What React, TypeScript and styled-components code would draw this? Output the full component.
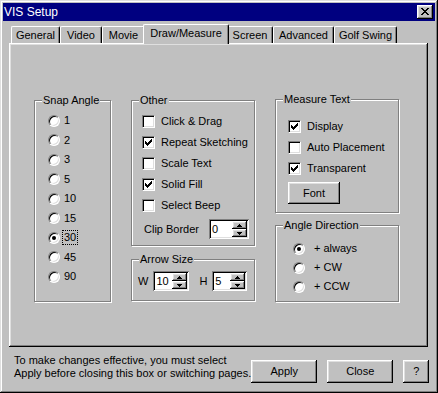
import React from 'react';
import styled, { createGlobalStyle, css } from 'styled-components';

const GlobalStyle = createGlobalStyle`
  html, body { margin: 0; padding: 0; background: #c0c0c0; }
  body {
    font-family: "Liberation Sans", Arial, sans-serif;
    font-size: 11px;
    color: #000;
  }
  * { box-sizing: border-box; }
`;

const raised = css`
  box-shadow: inset -1px -1px #000, inset 1px 1px #fff, inset -2px -2px #808080, inset 2px 2px #dfdfdf;
`;

const sunken = css`
  box-shadow: inset 1px 1px #808080, inset -1px -1px #fff, inset 2px 2px #000, inset -2px -2px #dfdfdf;
`;

const Window = styled.div`
  width: 438px;
  height: 393px;
  padding: 3px;
  background: #c0c0c0;
  box-shadow: inset -1px -1px #000, inset 1px 1px #dfdfdf, inset -2px -2px #808080, inset 2px 2px #fff;
  display: flex;
  flex-direction: column;
`;

const TitleBar = styled.div`
  height: 18px;
  flex: none;
  background: #000080;
  color: #fff;
  display: flex;
  align-items: center;
  justify-content: space-between;
  padding: 0 2px 0 1px;
  font-size: 12px;
`;

const CloseButton = styled.div`
  width: 16px;
  height: 14px;
  background: #c0c0c0;
  ${raised};
  display: flex;
  align-items: center;
  justify-content: center;
  padding: 0 1px 1px 0;
`;

const Body = styled.div`
  flex: 1;
  display: flex;
  flex-direction: column;
  padding: 3px 7px 0 6px;
`;

const TabRow = styled.div`
  display: flex;
  align-items: flex-end;
  height: 20px;
  padding-left: 2px;
  margin-bottom: -1px;
  position: relative;
  z-index: 1;
`;

const Tab = styled.div<{ $w: number; $active?: boolean }>`
  width: ${(p) => (p.$active ? p.$w + 4 : p.$w)}px;
  height: ${(p) => (p.$active ? 20 : 17)}px;
  margin: ${(p) => (p.$active ? '0 -2px 0 -2px' : '0 0 1px 0')};
  position: relative;
  z-index: ${(p) => (p.$active ? 2 : 1)};
  background: #c0c0c0;
  border-top: 1px solid #fff;
  border-left: 1px solid #fff;
  border-right: 1px solid #000;
  border-radius: 2px 2px 0 0;
  box-shadow: inset -1px 0 #808080;
  display: flex;
  justify-content: center;
  padding-top: 2px;
  line-height: 13px;
  white-space: nowrap;
`;

const Panel = styled.div`
  height: 304px;
  flex: none;
  background: #c0c0c0;
  box-shadow: inset -1px -1px #000, inset 1px 1px #fff, inset -2px -2px #808080, inset 2px 2px #dfdfdf;
  padding: 57px 0 0 25px;
  display: flex;
  align-items: flex-start;
  gap: 20px;
`;

const Column = styled.div<{ $gap: number }>`
  display: flex;
  flex-direction: column;
  gap: ${(p) => p.$gap}px;
`;

const Group = styled.div<{ $w: number; $pad: string; $top?: number }>`
  position: relative;
  width: ${(p) => p.$w}px;
  margin-top: ${(p) => p.$top ?? 0}px;
  border: 1px solid #808080;
  box-shadow: inset 1px 1px #fff, 1px 1px #fff;
  padding: ${(p) => p.$pad};
  display: flex;
  flex-direction: column;
`;

const Legend = styled.span`
  position: absolute;
  top: -7px;
  left: 7px;
  padding: 0 1px;
  background: #c0c0c0;
  line-height: 13px;
  white-space: nowrap;
`;

const OptionRow = styled.div<{ $h: number; $gap: number }>`
  height: ${(p) => p.$h}px;
  display: flex;
  align-items: center;
  gap: ${(p) => p.$gap}px;
  white-space: nowrap;
`;

const RadioCircle = styled.span`
  width: 12px;
  height: 12px;
  flex: none;
  border-radius: 50%;
  background: #fff;
  border: 1px solid;
  border-color: #808080 #fff #fff #808080;
  box-shadow: inset 1px 1px #000, inset -1px -1px #dfdfdf;
  display: flex;
  align-items: center;
  justify-content: center;
`;

const RadioDot = styled.span`
  width: 4px;
  height: 4px;
  border-radius: 50%;
  background: #000;
`;

const CheckBox = styled.span`
  width: 13px;
  height: 13px;
  flex: none;
  background: #fff;
  border: 1px solid;
  border-color: #808080 #fff #fff #808080;
  box-shadow: inset 1px 1px #000, inset -1px -1px #dfdfdf;
  display: flex;
  align-items: center;
  justify-content: center;
`;

const Label = styled.span<{ $focus?: boolean }>`
  line-height: 13px;
  padding: 0 1px;
  outline: ${(p) => (p.$focus ? '1px dotted #000' : 'none')};
  outline-offset: 0;
`;

const FieldRow = styled.div<{ $gap: number; $pad: number; $top?: number }>`
  display: flex;
  align-items: center;
  gap: ${(p) => p.$gap}px;
  padding-left: ${(p) => p.$pad}px;
  margin-top: ${(p) => p.$top ?? 0}px;
  white-space: nowrap;
`;

const SpinBox = styled.div<{ $w: number }>`
  width: ${(p) => p.$w}px;
  height: 20px;
  flex: none;
  background: #fff;
  ${sunken};
  display: flex;
  align-items: center;
  padding: 2px;
`;

const SpinValue = styled.span`
  flex: 1;
  padding-left: 1px;
  line-height: 13px;
`;

const SpinButtons = styled.div`
  width: 15px;
  height: 16px;
  display: flex;
  flex-direction: column;
`;

const SpinButton = styled.div`
  flex: 1;
  background: #c0c0c0;
  ${raised};
  display: flex;
  align-items: center;
  justify-content: center;
`;

const Button = styled.div<{ $w: number; $h: number }>`
  width: ${(p) => p.$w}px;
  height: ${(p) => p.$h}px;
  flex: none;
  background: #c0c0c0;
  ${raised};
  display: flex;
  align-items: center;
  justify-content: center;
  line-height: 13px;
`;

const Footer = styled.div`
  display: flex;
  align-items: flex-start;
  padding: 0 1px 0 5px;
`;

const FooterText = styled.div`
  margin-top: 7px;
  line-height: 13px;
  white-space: nowrap;
`;

const FooterButtons = styled.div`
  margin-left: auto;
  margin-top: 13px;
  display: flex;
  gap: 10px;
`;

const Check = () => (
  <svg width="7" height="7" viewBox="0 0 7 7" shapeRendering="crispEdges">
    <path
      d="M0 2h1v3H0z M1 3h1v3H1z M2 4h1v3H2z M3 3h1v3H3z M4 2h1v3H4z M5 1h1v3H5z M6 0h1v3H6z"
      fill="#000"
    />
  </svg>
);

const Arrow = ({ up }: { up?: boolean }) => (
  <svg width="5" height="3" viewBox="0 0 5 3" shapeRendering="crispEdges">
    <path d={up ? 'M2 0h1v1H2z M1 1h3v1H1z M0 2h5v1H0z' : 'M0 0h5v1H0z M1 1h3v1H1z M2 2h1v1H2z'} fill="#000" />
  </svg>
);

const CloseGlyph = () => (
  <svg width="8" height="7" viewBox="0 0 8 7" shapeRendering="crispEdges">
    <path
      d="M0 0h2v1H0z M6 0h2v1H6z M1 1h2v1H1z M5 1h2v1H5z M2 2h4v1H2z M3 3h2v1H3z M2 4h4v1H2z M1 5h2v1H1z M5 5h2v1H5z M0 6h2v1H0z M6 6h2v1H6z"
      fill="#000"
    />
  </svg>
);

const Radio = ({ label, checked, focus, h, gap }: { label: string; checked?: boolean; focus?: boolean; h: number; gap: number }) => (
  <OptionRow $h={h} $gap={gap}>
    <RadioCircle>{checked && <RadioDot />}</RadioCircle>
    <Label $focus={focus}>{label}</Label>
  </OptionRow>
);

const Checkbox = ({ label, checked, h }: { label: string; checked?: boolean; h: number }) => (
  <OptionRow $h={h} $gap={5}>
    <CheckBox>{checked && <Check />}</CheckBox>
    <Label>{label}</Label>
  </OptionRow>
);

const Spin = ({ value, w }: { value: string; w: number }) => (
  <SpinBox $w={w}>
    <SpinValue>{value}</SpinValue>
    <SpinButtons>
      <SpinButton>
        <Arrow up />
      </SpinButton>
      <SpinButton>
        <Arrow />
      </SpinButton>
    </SpinButtons>
  </SpinBox>
);

const tabs = [
  { label: 'General', w: 49 },
  { label: 'Video', w: 42 },
  { label: 'Movie', w: 43 },
  { label: 'Draw/Measure', w: 82, active: true },
  { label: 'Screen', w: 46 },
  { label: 'Advanced', w: 61 },
  { label: 'Golf Swing', w: 63 },
];

const snapAngles = ['1', '2', '3', '5', '10', '15', '30', '45', '90'];

export default function App() {
  return (
    <>
      <GlobalStyle />
      <Window>
        <TitleBar>
          <span>VIS Setup</span>
          <CloseButton>
            <CloseGlyph />
          </CloseButton>
        </TitleBar>
        <Body>
          <TabRow>
            {tabs.map((t) => (
              <Tab key={t.label} $w={t.w} $active={t.active}>
                {t.label}
              </Tab>
            ))}
          </TabRow>
          <Panel>
            <Group $w={77} $pad="10px 0 14px 13px">
              <Legend>Snap Angle</Legend>
              {snapAngles.map((a) => (
                <Radio key={a} label={a} checked={a === '30'} focus={a === '30'} h={19.5} gap={3} />
              ))}
            </Group>
            <Column $gap={13}>
              <Group $w={124} $pad="10px 0 6px 10px">
                <Legend>Other</Legend>
                <Checkbox label="Click & Drag" h={21} />
                <Checkbox label="Repeat Sketching" checked h={21} />
                <Checkbox label="Scale Text" h={21} />
                <Checkbox label="Solid Fill" checked h={21} />
                <Checkbox label="Select Beep" h={21} />
                <FieldRow $gap={10} $pad={2} $top={3}>
                  <span>Clip Border</span>
                  <Spin value="0" w={40} />
                </FieldRow>
              </Group>
              <Group $w={124} $pad="11px 0 9px 6px">
                <Legend>Arrow Size</Legend>
                <FieldRow $gap={5} $pad={0}>
                  <span>W</span>
                  <Spin value="10" w={36} />
                  <span style={{ marginLeft: 5 }}>H</span>
                  <Spin value="5" w={35} />
                </FieldRow>
              </Group>
            </Column>
            <Column $gap={12}>
              <Group $w={124} $pad="16px 0 8px 12px" $top={-1}>
                <Legend>Measure Text</Legend>
                <Checkbox label="Display" checked h={21} />
                <Checkbox label="Auto Placement" h={21} />
                <Checkbox label="Transparent" checked h={21} />
                <FieldRow $gap={0} $pad={-2} $top={3}>
                  <Button $w={52} $h={22}>Font</Button>
                </FieldRow>
              </Group>
              <Group $w={124} $pad="13px 0 5px 17px">
                <Legend>Angle Direction</Legend>
                <Radio label="+ always" checked h={19} gap={8} />
                <Radio label="+ CW" h={19} gap={8} />
                <Radio label="+ CCW" h={19} gap={8} />
              </Group>
            </Column>
          </Panel>
          <Footer>
            <FooterText>
              To make changes effective, you must select
              <br />
              Apply before closing this box or switching pages.
            </FooterText>
            <FooterButtons>
              <Button $w={66} $h={23}>Apply</Button>
              <Button $w={66} $h={23}>Close</Button>
              <Button $w={26} $h={23}>?</Button>
            </FooterButtons>
          </Footer>
        </Body>
      </Window>
    </>
  );
}
